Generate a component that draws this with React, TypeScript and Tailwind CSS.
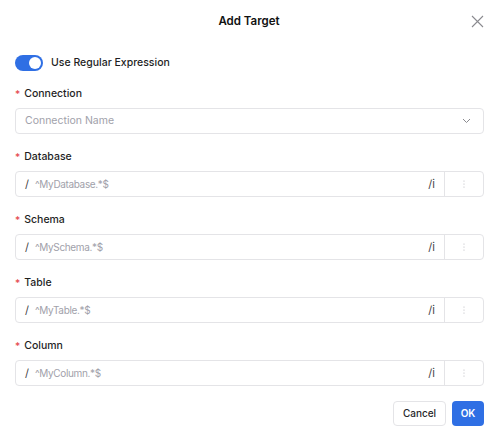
import React from "react";

function Label({ text }: { text: string }) {
  return (
    <div className="flex items-center h-4 text-[10.5px] font-medium text-[#1f1f1f] leading-4">
      <span className="text-[#e5484d] mr-[4px] text-[10px]">*</span>
      <span>{text}</span>
    </div>
  );
}

function RegexInput({ label, placeholder }: { label: string; placeholder: string }) {
  return (
    <div className="flex flex-col mb-[15px]">
      <Label text={label} />
      <div className="mt-[6px] flex h-[26px] items-stretch rounded-[4px] border border-[#e4e4e7] bg-white">
        <div className="flex flex-1 items-center pl-[9px]">
          <span className="text-[11px] text-[#3f3f46]">/</span>
          <span className="ml-[6px] text-[10px] tracking-[-0.35px] text-[#a1a1aa]">{placeholder}</span>
        </div>
        <div className="flex items-center pr-[9px] text-[11px] text-[#3f3f46]">/i</div>
        <div className="flex w-[39px] items-center justify-center border-l border-[#e4e4e7]">
          <svg width="2" height="8" viewBox="0 0 2 8">
            <circle cx="1" cy="1" r="0.6" fill="#b4b4bb" />
            <circle cx="1" cy="4" r="0.6" fill="#b4b4bb" />
            <circle cx="1" cy="7" r="0.6" fill="#b4b4bb" />
          </svg>
        </div>
      </div>
    </div>
  );
}

export default function App() {
  return (
    <div
      className="w-[498px] h-[437px] bg-white overflow-hidden"
      style={{ fontFamily: "Inter, 'Noto Sans', sans-serif" }}
    >
      <div className="relative flex h-[42px] items-center justify-center pt-[2px]">
        <span className="text-[11.5px] font-semibold text-[#111]">Add Target</span>
        <svg
          className="absolute right-[14px] top-[15px]"
          width="13"
          height="13"
          viewBox="0 0 13 13"
        >
          <path d="M1 1 L12 12 M12 1 L1 12" stroke="#8a8a8f" strokeWidth="1.1" />
        </svg>
      </div>
      <div className="pl-[15px] pr-[14px]">
        <div className="mt-[13px] flex items-center">
          <div className="relative h-[16px] w-[28px] rounded-full bg-[#2f6fe4]">
            <div className="absolute right-[2px] top-[2px] h-[12px] w-[12px] rounded-full bg-white" />
          </div>
          <span className="ml-[8px] text-[10.5px] font-medium text-[#1f1f1f]">
            Use Regular Expression
          </span>
        </div>
        <div className="mt-[15px] flex flex-col mb-[15px]">
          <Label text="Connection" />
          <div className="mt-[6px] flex h-[26px] items-center justify-between rounded-[4px] border border-[#e4e4e7] bg-white pl-[9px] pr-[12px]">
            <span className="text-[10.5px] text-[#a1a1aa]">Connection Name</span>
            <svg width="9" height="6" viewBox="0 0 9 6">
              <path d="M1 1 L4.5 4.5 L8 1" stroke="#8a8a8f" strokeWidth="1" fill="none" />
            </svg>
          </div>
        </div>
        <RegexInput label="Database" placeholder="^MyDatabase.*$" />
        <RegexInput label="Schema" placeholder="^MySchema.*$" />
        <RegexInput label="Table" placeholder="^MyTable.*$" />
        <RegexInput label="Column" placeholder="^MyColumn.*$" />
        <div className="mt-[14px] flex justify-end gap-[6px]">
          <button className="h-[25px] w-[53px] rounded-[4px] border border-[#e4e4e7] bg-white text-[10px] font-medium text-[#27272a]">
            Cancel
          </button>
          <button className="h-[25px] w-[32px] rounded-[4px] bg-[#2f6fe4] text-[10px] font-semibold text-white">
            OK
          </button>
        </div>
      </div>
    </div>
  );
}
